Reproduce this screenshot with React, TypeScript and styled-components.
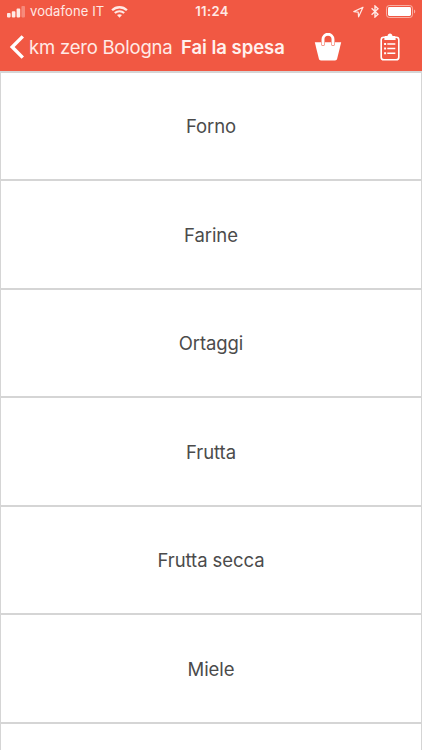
import React from "react";
import styled, { createGlobalStyle } from "styled-components";

const GlobalStyle = createGlobalStyle`
  * { box-sizing: border-box; }
  html, body { margin: 0; background: #fff; overflow: hidden; }
  body { font-family: Inter, "Liberation Sans", sans-serif; }
`;

const Screen = styled.div`
  width: 422px;
  height: 750px;
  overflow: hidden;
  background: #fff;
`;

const Header = styled.header`
  height: 70.9px;
  background: #f15843;
  color: #fff;
`;

const StatusBar = styled.div`
  height: 23px;
  display: grid;
  grid-template-columns: 1fr auto 1fr;
  align-items: center;
  padding: 0 6px 0 7px;
  color: #ffe9e5;
`;

const StatusGroup = styled.div<{ $end?: boolean }>`
  display: flex;
  align-items: center;
  justify-content: ${(p) => (p.$end ? "flex-end" : "flex-start")};
  gap: ${(p) => (p.$end ? "7px" : "0")};
  svg { display: block; flex: none; }
`;

const Carrier = styled.span`
  width: 74px;
  margin: 0 7px 0 5px;
  font-size: 13px;
  line-height: 23px;
  letter-spacing: 0.1px;
  white-space: nowrap;
`;

const Clock = styled.span`
  font-size: 13px;
  font-weight: 600;
  line-height: 23px;
  letter-spacing: 0.4px;
  padding-left: 1px;
`;

const NavBar = styled.nav`
  height: 48px;
  display: flex;
  align-items: center;
  padding-left: 9px;
  svg { display: block; flex: none; }
`;

const BackButton = styled.button`
  display: flex;
  align-items: center;
  flex: none;
  width: 172px;
  padding: 0;
  border: 0;
  background: none;
  color: #ffeae6;
  font: 400 18.5px/24px Inter, sans-serif;
  letter-spacing: -0.22px;
  white-space: nowrap;
  gap: 5px;
`;

const Title = styled.h1`
  flex: none;
  width: 133px;
  margin: 0;
  font-size: 18.5px;
  font-weight: 600;
  line-height: 24px;
  letter-spacing: -0.03px;
  white-space: nowrap;
  color: #fff1ee;
`;

const IconButton = styled.button`
  flex: none;
  padding: 0;
  border: 0;
  margin-right: 38px;
  background: none;
  color: #fff;
`;

const List = styled.ul`
  margin: 0;
  padding: 0;
  list-style: none;
  border: solid #d5d5d5;
  border-width: 0 1px;
`;

const Row = styled.li`
  height: 108.5px;
  display: flex;
  align-items: center;
  justify-content: center;
  border-top: 2px solid #d5d5d5;
  color: #4b4b4b;
  font-size: 18.5px;
  line-height: 24px;
  letter-spacing: -0.08px;
`;

const SignalIcon = () => (
  <svg width="18" height="12" viewBox="0 0 18 12" fill="currentColor">
    <rect x="0" y="7" width="3.6" height="4.4" rx=".8" />
    <rect x="4.8" y="5.2" width="3.6" height="6.2" rx=".8" />
    <rect x="9.6" y="2.6" width="3.6" height="8.8" rx=".8" />
    <rect x="14.4" y="0" width="3.6" height="11.4" rx=".8" opacity=".35" />
  </svg>
);

const WifiIcon = () => (
  <svg width="17" height="12" viewBox="0 0 17 12" fill="none" stroke="currentColor">
    <path d="M1.1 4.3C5.3.2 11.7.2 15.9 4.3" strokeWidth="2.3" />
    <path d="M3.8 7.1c2.7-2.5 6.7-2.5 9.4 0" strokeWidth="2.1" />
    <path d="M8.5 11.7 6 9.1c1.4-1.2 3.6-1.2 5 0z" fill="currentColor" stroke="none" />
  </svg>
);

const LocationIcon = () => (
  <svg width="11" height="12" viewBox="0 0 11 12" fill="none" stroke="currentColor" strokeWidth="1.2" strokeLinejoin="round">
    <path d="M10 1.2.8 5.6l4.4.6.4 4.6z" />
  </svg>
);

const BluetoothIcon = () => (
  <svg width="8" height="13" viewBox="0 0 8 13" fill="none" stroke="currentColor" strokeWidth="1.4">
    <path d="M.6 3.3 7 9.2 4 12V1l3 2.8L.6 9.7" />
  </svg>
);

const BatteryIcon = () => (
  <svg width="30" height="13" viewBox="0 0 30 13" fill="none">
    <rect x=".5" y=".5" width="26" height="12" rx="2.8" stroke="currentColor" opacity=".6" />
    <rect x="2" y="2" width="23" height="9" rx="1.4" fill="#fff" />
    <path d="M28 4.5c1.7.7 1.7 3.3 0 4z" fill="currentColor" opacity=".6" />
  </svg>
);

const BackIcon = () => (
  <svg width="15" height="24" viewBox="0 0 15 24" fill="none" stroke="#fff" strokeWidth="3.4">
    <path d="M13.8 1.4 3.2 12l10.6 10.6" />
  </svg>
);

const BasketIcon = () => (
  <svg width="28" height="28" viewBox="0 0 28 28">
    <path d="M.8 9.2h26.4l-4 16.3c-.4 1.4-1 1.9-2.2 1.9H7c-1.2 0-1.8-.5-2.2-1.9z" fill="currentColor" />
    <path d="M9 11V6.2a5 5 0 0 1 10 0V11" fill="none" stroke="#f15843" strokeWidth="3.8" strokeLinecap="round" />
    <path d="M9 11V6.2a5 5 0 0 1 10 0V11" fill="none" stroke="currentColor" strokeWidth="2.9" strokeLinecap="round" />
  </svg>
);

const ClipboardIcon = () => (
  <svg width="20" height="28" viewBox="0 0 20 28" fill="none" stroke="currentColor">
    <rect x="1.2" y="4.2" width="17.6" height="22.6" rx="2.6" strokeWidth="1.6" />
    <path d="M4.4 7V4.6c0-1 .6-1.5 1.6-1.5h1.5C7.7 1.4 8.6.4 10 .4s2.3 1 2.5 2.7H14c1 0 1.6.5 1.6 1.5V7z" fill="currentColor" stroke="none" />
    <path d="M7.3 11h8M7.3 15.6h8M7.3 20.2h8" strokeWidth="1.5" />
    <path d="M4.1 11h2M4.1 15.6h2M4.1 20.2h2" strokeWidth="2" />
  </svg>
);

const categories = ["Forno", "Farine", "Ortaggi", "Frutta", "Frutta secca", "Miele", ""];

export default function App() {
  return (
    <Screen>
      <GlobalStyle />
      <Header>
        <StatusBar>
          <StatusGroup>
            <SignalIcon />
            <Carrier>vodafone IT</Carrier>
            <WifiIcon />
          </StatusGroup>
          <Clock>11:24</Clock>
          <StatusGroup $end>
            <LocationIcon />
            <BluetoothIcon />
            <BatteryIcon />
          </StatusGroup>
        </StatusBar>
        <NavBar>
          <BackButton>
            <BackIcon />
            km zero Bologna
          </BackButton>
          <Title>Fai la spesa</Title>
          <IconButton aria-label="Carrello"><BasketIcon /></IconButton>
          <IconButton aria-label="Lista"><ClipboardIcon /></IconButton>
        </NavBar>
      </Header>
      <List>
        {categories.map((name, i) => (
          <Row key={i}>{name}</Row>
        ))}
      </List>
    </Screen>
  );
}
